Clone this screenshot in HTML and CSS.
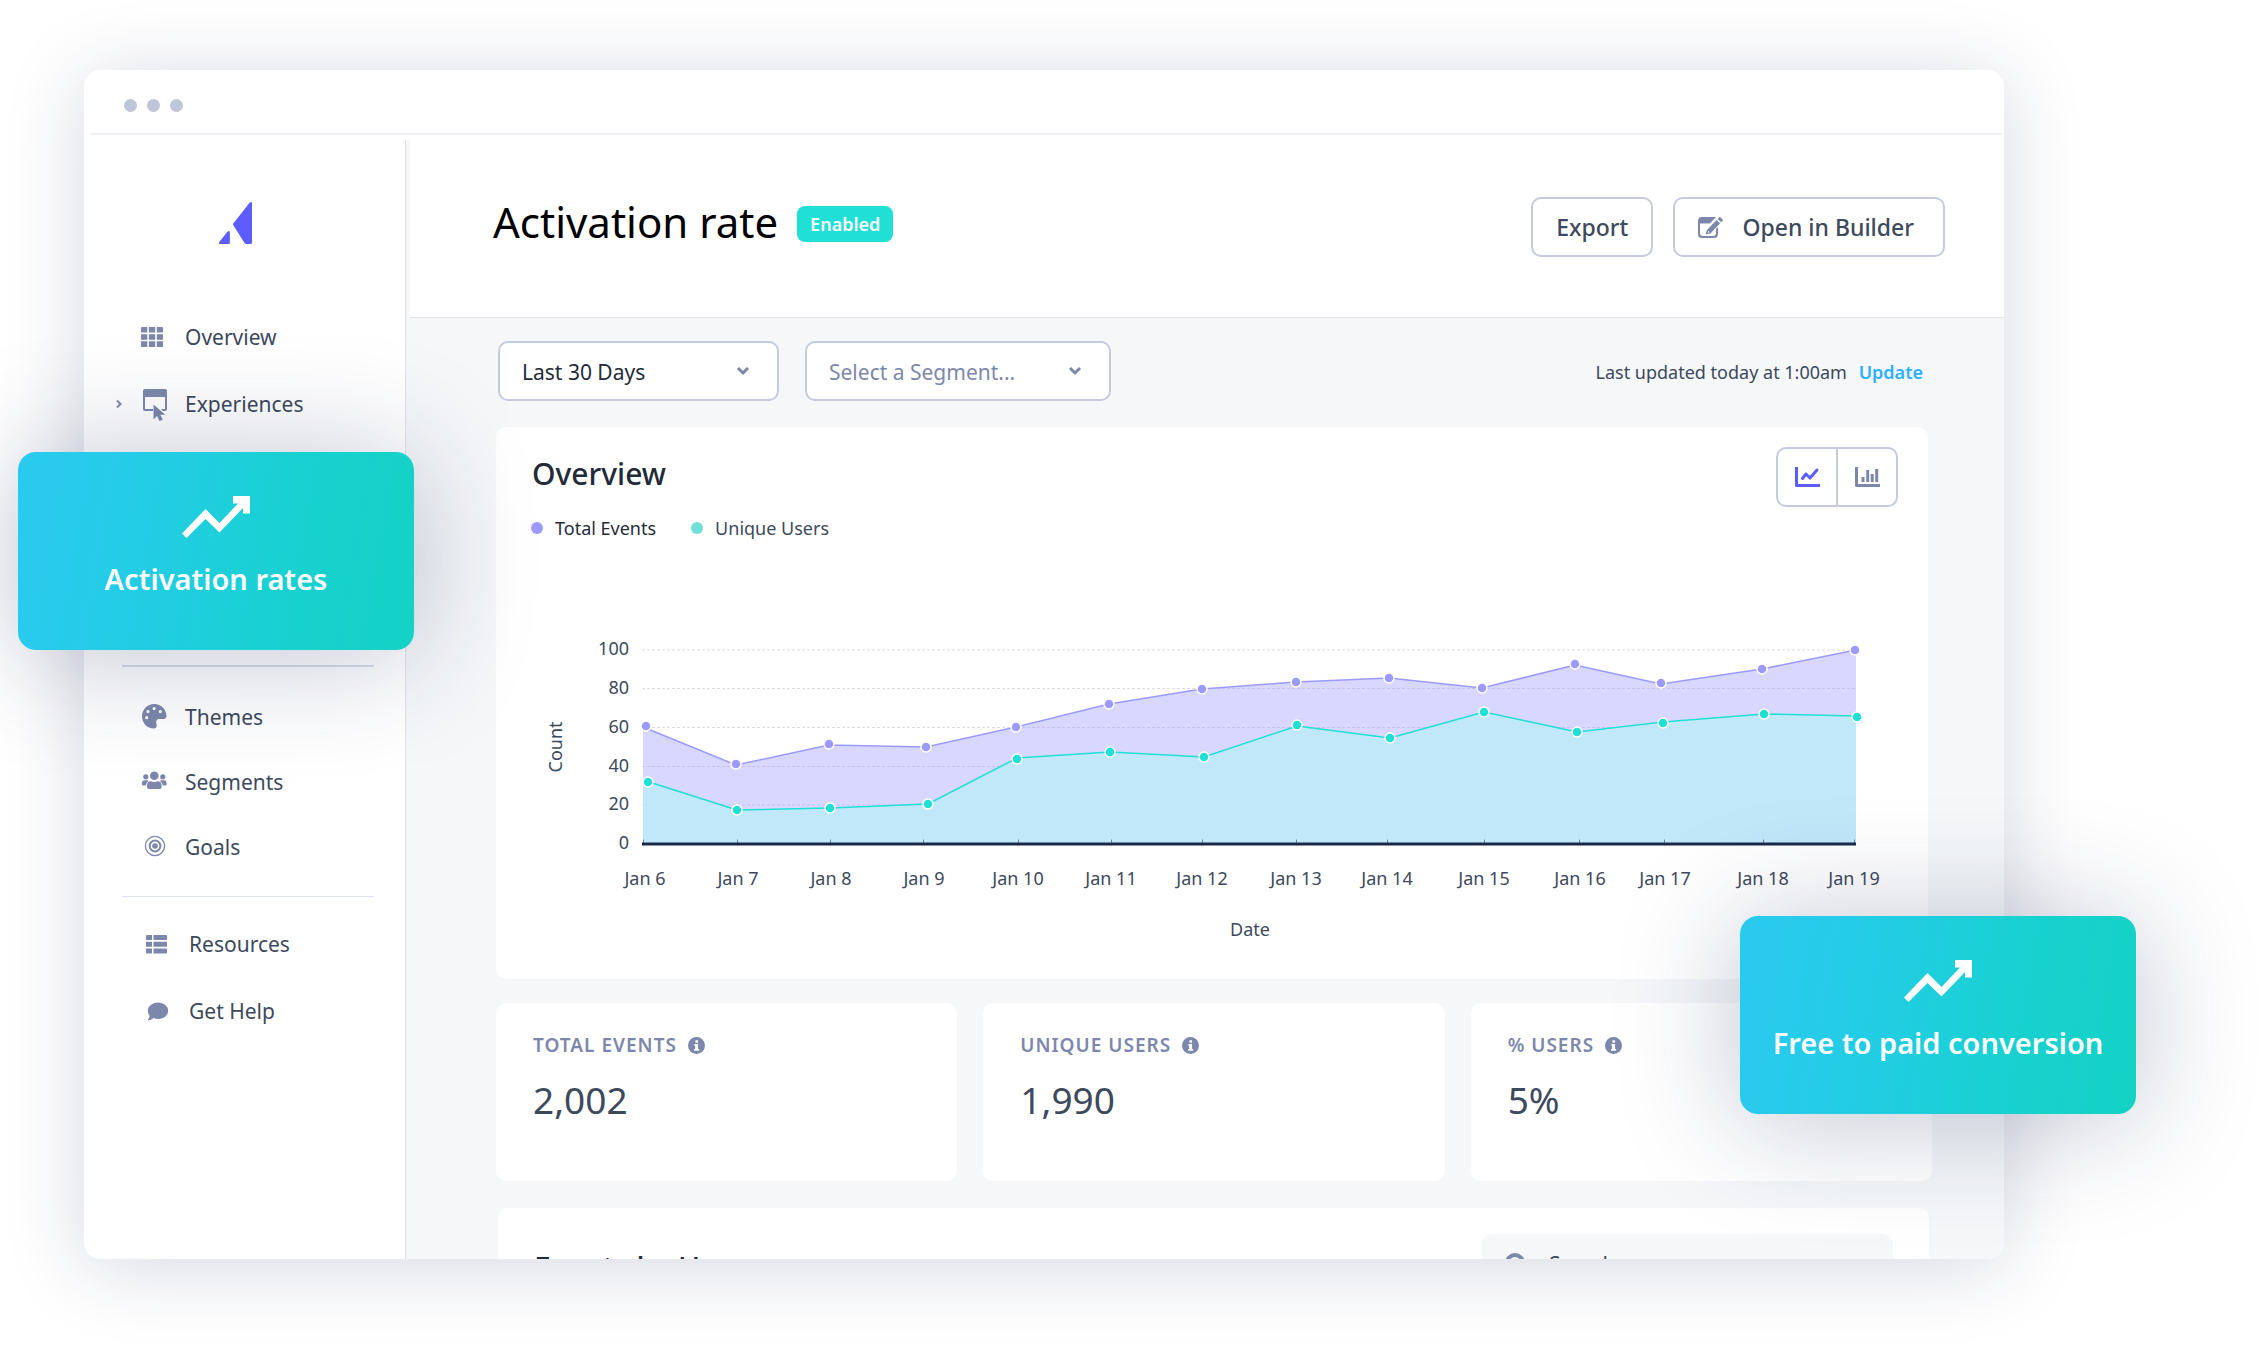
FILE: index.html
```html
<!DOCTYPE html>
<html lang="en">
<head>
<meta charset="utf-8">
<meta name="viewport" content="width=device-width, initial-scale=1">
<title>Activation rate</title>
<link rel="stylesheet" href="styles.css">
</head>
<body>
<div class="stage">
  <div class="window">
    <div class="titlebar"><span class="dot"></span><span class="dot"></span><span class="dot"></span></div>
    <div class="app">
      <aside class="sidebar">
        <a class="logo" href="#" aria-label="Home">
          <svg width="33" height="42" viewBox="0 0 33 42" fill="#5c5cff"><path d="M30.800.6Q33-.8 33 1.500V40.500Q33 42 31.500 42H27.500Q26.200 42 25.500 40.900L14.400 23.200Q13.800 22.200 14.500 21.200Z"/><path d="M8.600 29.600Q10.900 28 10.900 31V40.500Q10.900 42 9.400 42H1.200Q-.6 42 .3 40.100Z"/></svg>
        </a>
        <nav>
          <ul class="nav nav-main">
            <li><a href="#">
              <svg class="icon" viewBox="0 0 26 26"><path d="M1 3h5.300v5.500H0V4a1 1 0 0 1 1-1zM7.900 3h6.300v5.500H7.900zM15.800 3H21a1 1 0 0 1 1 1v4.500h-6.200zM0 10.200h6.300v5.500H0zM7.900 10.200h6.300v5.500H7.900zM15.800 10.200H22v5.500h-6.200zM0 17.300h6.300V23H1a1 1 0 0 1-1-1zM7.900 17.300h6.300V23H7.900zM15.800 17.300H22V22a1 1 0 0 1-1 1h-5.200z"/></svg>
              Overview</a></li>
            <li><a href="#">
              <svg class="caret" viewBox="0 0 8 10"><path d="M2 1.500 5.500 5 2 8.500"/></svg>
              <svg class="icon icon-tall" viewBox="0 0 26 34"><path fill-rule="evenodd" d="M4 2h20a2 2 0 0 1 2 2v18a2 2 0 0 1-2 2h-2l-2-2h4V10H4v12h8v2H4a2 2 0 0 1-2-2V4a2 2 0 0 1 2-2z"/><path d="M12.500 17.500v15l3.600-3.400 2.500 5 3.200-1.500-2.500-4.800h5z"/></svg>
              Experiences</a></li>
          </ul>
          <ul class="nav nav-library">
            <li><a href="#">
              <svg class="icon" viewBox="0 0 26 26"><path fill-rule="evenodd" d="M13.200 0C6.500 0 1 5.500 1 12.200S6.300 24.500 12.500 24.500c2.600 0 3.800-2.300 3-4.600-1-2.900.3-5 3.200-5h4c1.600 0 2.800-1.200 2.800-2.900C25.300 5.200 20 0 13.200 0zM5.700 15.300a1.600 1.600 0 1 1 0-3.200 1.600 1.600 0 0 1 0 3.200zM7 9.200A1.600 1.600 0 1 1 7 6a1.600 1.600 0 0 1 0 3.200zM13.100 6.200a1.600 1.600 0 1 1 0-3.200 1.600 1.600 0 0 1 0 3.200zM19.300 9.200a1.600 1.600 0 1 1 0-3.200 1.600 1.600 0 0 1 0 3.200z"/></svg>
              Themes</a></li>
            <li><a href="#">
              <svg class="icon" viewBox="0 0 26 26"><circle cx="13.300" cy="6.800" r="4.300"/><circle cx="4.800" cy="7.800" r="2.600"/><circle cx="21.800" cy="7.800" r="2.600"/><path d="M10 12.200q3.300 1.500 6.600 0 4 0 4 4.300v1.500q0 2-2 2H8q-2 0-2-2v-1.500q0-4.300 4-4.300zM3.500 11.300h2.600q.9 0 1.500.6-2.300 1.400-2.800 4.500H2q-1 0-1-1v-1.200q0-2.900 2.500-2.900zM20.500 11.300h2.600q2.500 0 2.500 2.900v1.200q0 1-1 1h-2.800q-.5-3.100-2.800-4.500.6-.6 1.500-.6z"/></svg>
              Segments</a></li>
            <li><a href="#">
              <svg class="icon" viewBox="0 0 26 26"><g fill="none" stroke="#7d87ab"><circle cx="14" cy="12" r="9.600" stroke-width="1.300"/><circle cx="14" cy="12" r="5.400" stroke-width="2"/></g><circle cx="14" cy="12" r="2.800"/></svg>
              Goals</a></li>
          </ul>
          <ul class="nav nav-support">
            <li><a href="#">
              <svg class="icon" viewBox="0 0 26 26"><path d="M2 4h5v5H1V5a1 1 0 0 1 1-1zM8.500 4H21a1 1 0 0 1 1 1v4H8.500zM1 10.700h6v5H1zM8.500 10.700H22v5H8.500zM1 17.400h6v5H2a1 1 0 0 1-1-1zM8.500 17.400H22v4a1 1 0 0 1-1 1H8.500z"/></svg>
              Resources</a></li>
            <li><a href="#">
              <svg class="icon" viewBox="0 0 26 26"><path d="M13 4.500c5.700 0 10.200 3.700 10.200 8.300S18.700 21 13 21c-1.700 0-3.200-.3-4.600-.9C6.900 21.400 5 22.400 3 22.400c-.4 0-.5-.4-.2-.7 1-1 1.700-2.500 1.900-3.900C3.500 16.400 2.800 14.700 2.800 12.800c0-4.600 4.500-8.300 10.200-8.300z"/></svg>
              Get Help</a></li>
          </ul>
        </nav>
      </aside>
      <main class="main">
        <header class="header">
          <div class="heading"><h1>Activation rate</h1><span class="badge">Enabled</span></div>
          <div class="actions">
            <button class="btn" type="button">Export</button>
            <button class="btn btn-builder" type="button">
              <svg width="25" height="21" viewBox="0 0 25 21"><path fill="#7d87ab" fill-rule="evenodd" d="M4 0h14l-6 6.500H2V16q0 3 3 3h10q3 0 3-3v-4l2-2v6.500q0 4.500-4 4.500H4q-4 0-4-4V4q0-4 4-4zM8.800 13.200 18.500 3l3.600 3.300-9.700 10.200-4.200.7q-.6 0-.5-.6zM10.200 13.700l-.6 2 2-.5zM19.600 1.900l1.400-1.400q.8-.8 1.600 0l1.900 1.800q.7.800 0 1.600l-1.300 1.300z"/></svg>
              Open in Builder</button>
          </div>
        </header>
        <div class="content">
          <div class="toolbar">
            <div class="select select-range">
              <select aria-label="Date range"><option>Last 30 Days</option></select>
              <svg width="14" height="10" viewBox="0 0 14 10"><path d="M2 2l5 5 5-5"/></svg>
            </div>
            <div class="select select-segment">
              <select aria-label="Segment"><option>Select a Segment...</option></select>
              <svg width="14" height="10" viewBox="0 0 14 10"><path d="M2 2l5 5 5-5"/></svg>
            </div>
            <p class="updated">Last updated today at 1:00am <a href="#">Update</a></p>
          </div>

          <section class="card overview">
            <div class="card-head">
              <h2>Overview</h2>
              <div class="toggle">
                <button type="button" aria-label="Line chart" aria-pressed="true"><svg width="25" height="20" viewBox="0 0 25 20" fill="none" stroke="#5c5cff"><path stroke-width="3" stroke-linejoin="round" d="M1.500 0v18.500H25"/><path stroke-width="3" stroke-linecap="round" stroke-linejoin="round" d="M7.500 11.500 11 7l4 4 7-8"/></svg></button>
                <button type="button" aria-label="Bar chart" aria-pressed="false"><svg width="25" height="20" viewBox="0 0 25 20" fill="none" stroke="#7d87ab"><path stroke-width="3" stroke-linejoin="round" d="M1.500 0v18.500H25"/><path stroke-width="3" d="M8 15v-5M12.700 15V3M17.200 15V7M21.700 15V2"/></svg></button>
              </div>
            </div>
            <ul class="legend">
              <li class="total">Total Events</li>
              <li class="unique">Unique Users</li>
            </ul>
            <svg class="chart" viewBox="496 540 1432 439" role="img" aria-label="Total events and unique users per day">
              <g class="grid"><path d="M642 650H1856M642 688.500H1856M642 727.500H1856M642 766.500H1856M642 805H1856"/></g>
              <path class="area-total" d="M643 727 736 765 829 745 926 747 1016 727 1109 704 1202 689 1296 682 1389 678 1482 688 1575 665 1661 684 1762 669 1856 650V844H643Z"/>
              <path class="area-unique" d="M643 781 737 810 830 808 928 804 1017 758 1110 752 1204 757 1297 726 1390 738 1484 712 1577 732 1663 722 1764 714 1856 716V844H643Z"/>
              <path class="line-total" d="M643 727 736 765 829 745 926 747 1016 727 1109 704 1202 689 1296 682 1389 678 1482 688 1575 665 1661 684 1762 669 1856 650"/>
              <path class="line-unique" d="M646 781 737 810 830 808 928 804 1017 758 1110 752 1204 757 1297 726 1390 738 1484 712 1577 732 1663 722 1764 714 1856 716"/>
              <path class="axis" d="M642 844H1856"/>
              <path class="ticks" d="M643.500 839.500v6M737.500 839.500v6M830.500 839.500v6M923.500 839.500v6M1018.500 839.500v6M1111.500 839.500v6M1202.500 839.500v6M1296.500 839.500v6M1387.500 839.500v6M1484.500 839.500v6M1579.500 839.500v6M1664.500 839.500v6M1763.500 839.500v6M1854.500 839.500v6"/>
              <g class="points-total">
                <circle cx="646" cy="726" r="5"/><circle cx="736" cy="764" r="5"/><circle cx="829" cy="744" r="5"/><circle cx="926" cy="747" r="5"/><circle cx="1016" cy="727" r="5"/><circle cx="1109" cy="704" r="5"/><circle cx="1202" cy="689" r="5"/><circle cx="1296" cy="682" r="5"/><circle cx="1389" cy="678" r="5"/><circle cx="1482" cy="688" r="5"/><circle cx="1575" cy="664" r="5"/><circle cx="1661" cy="683" r="5"/><circle cx="1762" cy="669" r="5"/><circle cx="1855" cy="650" r="5"/>
              </g>
              <g class="points-unique">
                <circle cx="648" cy="782" r="5"/><circle cx="737" cy="810" r="5"/><circle cx="830" cy="808" r="5"/><circle cx="928" cy="804" r="5"/><circle cx="1017" cy="759" r="5"/><circle cx="1110" cy="752" r="5"/><circle cx="1204" cy="757" r="5"/><circle cx="1297" cy="725" r="5"/><circle cx="1390" cy="738" r="5"/><circle cx="1484" cy="712" r="5"/><circle cx="1577" cy="732" r="5"/><circle cx="1663" cy="723" r="5"/><circle cx="1764" cy="714" r="5"/><circle cx="1857" cy="717" r="5"/>
              </g>
              <g class="labels labels-y">
                <text x="629" y="655">100</text><text x="629" y="694">80</text><text x="629" y="733">60</text><text x="629" y="772">40</text><text x="629" y="810">20</text><text x="629" y="849">0</text>
              </g>
              <g class="labels labels-x">
                <text x="645" y="885">Jan 6</text><text x="738" y="885">Jan 7</text><text x="831" y="885">Jan 8</text><text x="924" y="885">Jan 9</text><text x="1018" y="885">Jan 10</text><text x="1111" y="885">Jan 11</text><text x="1202" y="885">Jan 12</text><text x="1296" y="885">Jan 13</text><text x="1387" y="885">Jan 14</text><text x="1484" y="885">Jan 15</text><text x="1580" y="885">Jan 16</text><text x="1665" y="885">Jan 17</text><text x="1763" y="885">Jan 18</text><text x="1854" y="885">Jan 19</text>
                <text x="1250" y="936">Date</text>
                <text transform="translate(562 747) rotate(-90)">Count</text>
              </g>
            </svg>
          </section>

          <div class="stats">
            <section class="card stat">
              <h3>TOTAL EVENTS <svg class="info" viewBox="0 0 16 16"><circle cx="8" cy="8" r="8"/><path d="M7 3h2.500v2.300H7zM6 6.500h3.500v4.700h1V13H5.700v-1.800h1V8.300H6z"/></svg></h3>
              <p>2,002</p>
            </section>
            <section class="card stat">
              <h3>UNIQUE USERS <svg class="info" viewBox="0 0 16 16"><circle cx="8" cy="8" r="8"/><path d="M7 3h2.500v2.300H7zM6 6.500h3.500v4.700h1V13H5.700v-1.800h1V8.300H6z"/></svg></h3>
              <p>1,990</p>
            </section>
            <section class="card stat">
              <h3>% USERS <svg class="info" viewBox="0 0 16 16"><circle cx="8" cy="8" r="8"/><path d="M7 3h2.500v2.300H7zM6 6.500h3.500v4.700h1V13H5.700v-1.800h1V8.300H6z"/></svg></h3>
              <p>5%</p>
            </section>
          </div>

          <section class="card events">
            <h2>Events by User</h2>
            <label class="search">
              <svg width="22" height="22" viewBox="0 0 22 22"><circle cx="10" cy="10" r="8"/><path d="M16 16l5 5"/></svg>
              <input type="search" placeholder="Search" aria-label="Search events">
            </label>
          </section>
        </div>
      </main>
    </div>
  </div>

  <div class="float float-activation">
    <svg width="68" height="42" viewBox="0 0 68 42"><path d="M51 0h17v17.500h-7V12L37.500 36.500 23.500 23 4.500 42 0 37.500 23.500 13 37.500 27 56 7.500h-5z"/></svg>
    <p>Activation rates</p>
  </div>
  <div class="float float-conversion">
    <svg width="68" height="42" viewBox="0 0 68 42"><path d="M51 0h17v17.500h-7V12L37.500 36.500 23.500 23 4.500 42 0 37.500 23.500 13 37.500 27 56 7.500h-5z"/></svg>
    <p>Free to paid conversion</p>
  </div>
</div>
</body>
</html>
```
FILE: styles.css
```css
* {
  box-sizing: border-box;
}

body {
  height: 100vh;
  margin: 0;
  padding: 70px 254px 99px 84px;
  background: #fff;
  color: #3d495c;
  font-family: "Noto Sans", "Open Sans", sans-serif;
}

h1, h2, h3, p, ul {
  margin: 0;
  padding: 0;
}

ul {
  list-style: none;
}

a {
  color: inherit;
  text-decoration: none;
}

button, select, input {
  font: inherit;
  color: inherit;
}

.stage {
  position: relative;
  height: 100%;
}

.window {
  display: flex;
  flex-direction: column;
  height: 100%;
  border-radius: 16px;
  background: #fff;
  box-shadow: 0 8px 80px rgba(28, 38, 88, 0.18);
  overflow: hidden;
}

.titlebar {
  display: flex;
  flex: none;
  align-items: center;
  gap: 10px;
  height: 65px;
  margin: 0 2px 0 7px;
  padding: 7px 0 0 33px;
  border-bottom: 2px solid #eff0f5;
}

.dot {
  width: 13px;
  height: 13px;
  border-radius: 50%;
  background: #c0c6da;
}

.app {
  display: flex;
  flex: 1;
  min-height: 0;
  padding-top: 5px;
}

/* Sidebar */
.sidebar {
  flex: none;
  width: 322px;
  border-right: 1px solid #dfe1e5;
}

.logo {
  display: block;
  height: 104px;
  padding: 62px 0 0 135px;
}

.logo svg {
  display: block;
}

.nav-main {
  margin-top: 59px;
}

.nav a {
  display: grid;
  grid-template-columns: 8px 26px auto;
  column-gap: 18px;
  align-items: center;
  height: 67px;
  padding-left: 31px;
  font-size: 21px;
  line-height: 30px;
}

.nav-library {
  margin: 228px 31px 0 38px;
  padding: 17px 0;
  border-top: 2px solid #d9deea;
  border-bottom: 1px solid #dde3f3;
}

.nav-library a {
  height: 65px;
  margin-left: -38px;
}

.nav-support {
  padding: 13px 0 0 4px;
}

.icon {
  grid-column: 2;
  width: 26px;
  height: 26px;
  fill: #7d87ab;
}

.icon-tall {
  height: 34px;
}

.caret {
  width: 8px;
  height: 10px;
  fill: none;
  stroke: #7d87ab;
  stroke-width: 2;
}

/* Page header */
.main {
  flex: 1;
  min-width: 0;
  background: #f5f7f9;
}

.header {
  display: flex;
  align-items: flex-start;
  justify-content: space-between;
  height: 178px;
  margin-left: 4px;
  padding: 57px 59px 0 83px;
  border-bottom: 1px solid #e0e2e5;
  background: #fff;
}

.heading {
  display: flex;
  align-items: center;
  gap: 19px;
}

h1 {
  color: #000;
  font-size: 42px;
  font-weight: 400;
  line-height: 50px;
}

.badge {
  margin-top: 4px;
  padding: 0 13px;
  border-radius: 8px;
  background: #20e0d6;
  color: #fff;
  font-size: 18px;
  font-weight: 600;
  line-height: 36px;
}

.actions {
  display: flex;
  gap: 20px;
}

.btn {
  display: flex;
  align-items: center;
  height: 60px;
  padding: 0 23px;
  border: 2px solid #c6cae0;
  border-radius: 10px;
  background: #fff;
  font-size: 23px;
  font-weight: 500;
}

.btn-builder {
  gap: 19px;
  padding-right: 29px;
}

/* Toolbar */
.content {
  padding: 23px 72px 0 90px;
}

.toolbar {
  display: flex;
  align-items: center;
  gap: 26px;
  margin: 0 9px 26px 2px;
}

.select {
  display: grid;
  align-items: center;
}

.select-range {
  width: 281px;
  color: #232b38;
}

.select-segment {
  width: 306px;
  color: #7d87ab;
}

.select select {
  grid-area: 1 / 1;
  height: 60px;
  padding: 2px 22px 0;
  border: 2px solid #c6cae0;
  border-radius: 10px;
  appearance: none;
  background: #fff;
  font-size: 21px;
}

.select svg {
  grid-area: 1 / 1;
  justify-self: end;
  margin-right: 29px;
  fill: none;
  stroke: #7d87ab;
  stroke-width: 3;
  pointer-events: none;
}

.updated {
  margin-left: auto;
  padding-top: 2px;
  font-size: 18px;
  line-height: 26px;
}

.updated a {
  margin-left: 7px;
  color: #2fb0ff;
  font-weight: 600;
}

/* Cards */
.card {
  border-radius: 10px;
  background: #fff;
}

h2 {
  color: #232b38;
  font-size: 30px;
  font-weight: 500;
  line-height: 54px;
}

.overview {
  margin-right: 4px;
  padding-top: 20px;
}

.card-head {
  display: flex;
  justify-content: space-between;
  align-items: flex-start;
  padding: 0 30px 0 36px;
}

.toggle {
  display: flex;
  border: 2px solid #c6cae0;
  border-radius: 10px;
}

.toggle button {
  display: grid;
  place-items: center;
  width: 58px;
  height: 56px;
  padding: 0;
  border: 0;
  background: none;
}

.toggle button + button {
  width: 60px;
  border-left: 2px solid #c6cae0;
}

.legend {
  display: flex;
  gap: 35px;
  margin-top: 9px;
  padding-left: 35px;
  font-size: 18px;
  line-height: 24px;
}

.legend li {
  display: flex;
  align-items: center;
  gap: 12px;
}

.legend li::before {
  content: "";
  width: 12px;
  height: 12px;
  border-radius: 50%;
  background: #6fdfda;
}

.legend .total {
  color: #232b38;
}

.legend .total::before {
  background: #9c9aff;
}

.chart {
  display: block;
  width: 100%;
}

.grid {
  fill: none;
  stroke: #dcdddf;
  stroke-dasharray: 3 2;
}

.area-total {
  fill: #9c9aff;
  fill-opacity: 0.4;
}

.area-unique {
  fill: #bdeaf8;
  fill-opacity: 0.88;
}

.line-total, .line-unique {
  fill: none;
  stroke: #9c9aff;
  stroke-width: 1.5;
}

.line-unique {
  stroke: #20dfd5;
}

.axis {
  stroke: #1a2a4c;
  stroke-width: 3;
}

.ticks {
  stroke: #1a2a4c;
  stroke-opacity: 0.5;
}

.points-total, .points-unique {
  fill: #9c9aff;
  stroke: #fff;
  stroke-width: 1.5;
}

.points-unique {
  fill: #20dfd5;
}

.labels {
  fill: #3d495c;
  font-size: 18px;
}

.labels-y {
  text-anchor: end;
}

.labels-x {
  text-anchor: middle;
}

/* Figures */
.stats {
  display: grid;
  grid-template-columns: repeat(3, 1fr);
  gap: 26px;
  margin-top: 24px;
}

.stat {
  height: 178px;
  padding: 28px 37px;
}

.stat h3 {
  display: flex;
  align-items: center;
  gap: 11px;
  color: #7d87ab;
  font-size: 19px;
  font-weight: 600;
  line-height: 28px;
  letter-spacing: 1px;
}

.info {
  width: 17px;
  height: 17px;
  fill: #7d87ab;
}

.info path {
  fill: #fff;
}

.stat p {
  margin-top: 16px;
  font-size: 37px;
  line-height: 50px;
}

.events {
  display: flex;
  justify-content: space-between;
  margin: 27px 3px 0 2px;
  padding: 26px 36px;
}

.events h2 {
  margin-top: 5px;
  line-height: 58px;
}

.search {
  display: flex;
  align-items: center;
  gap: 22px;
  width: 411px;
  height: 60px;
  padding-left: 23px;
  border-radius: 10px;
  background: #f5f7f9;
}

.search svg {
  fill: none;
  stroke: #7d87ab;
  stroke-width: 4;
}

.search input {
  width: 300px;
  padding: 0;
  border: 0;
  background: none;
  font-size: 21px;
}

.search input::placeholder {
  color: #3d495c;
}

/* Callouts that overlap the window */
.float {
  position: absolute;
  display: flex;
  flex-direction: column;
  align-items: center;
  width: 396px;
  height: 198px;
  padding-top: 44px;
  border-radius: 18px;
  background: linear-gradient(100deg, #2acaee 8%, #22cde4 35%, #18d1d0 68%, #14d2c6 98%);
  box-shadow: 0 6px 120px rgba(28, 38, 88, 0.28);
  color: #fff;
}

.float svg {
  fill: #fff;
}

.float p {
  margin-top: 20px;
  font-size: 29px;
  font-weight: 600;
  line-height: 42px;
  white-space: nowrap;
}

.float-activation {
  top: 382px;
  left: -66px;
}

.float-conversion {
  right: -132px;
  bottom: 145px;
}
```
